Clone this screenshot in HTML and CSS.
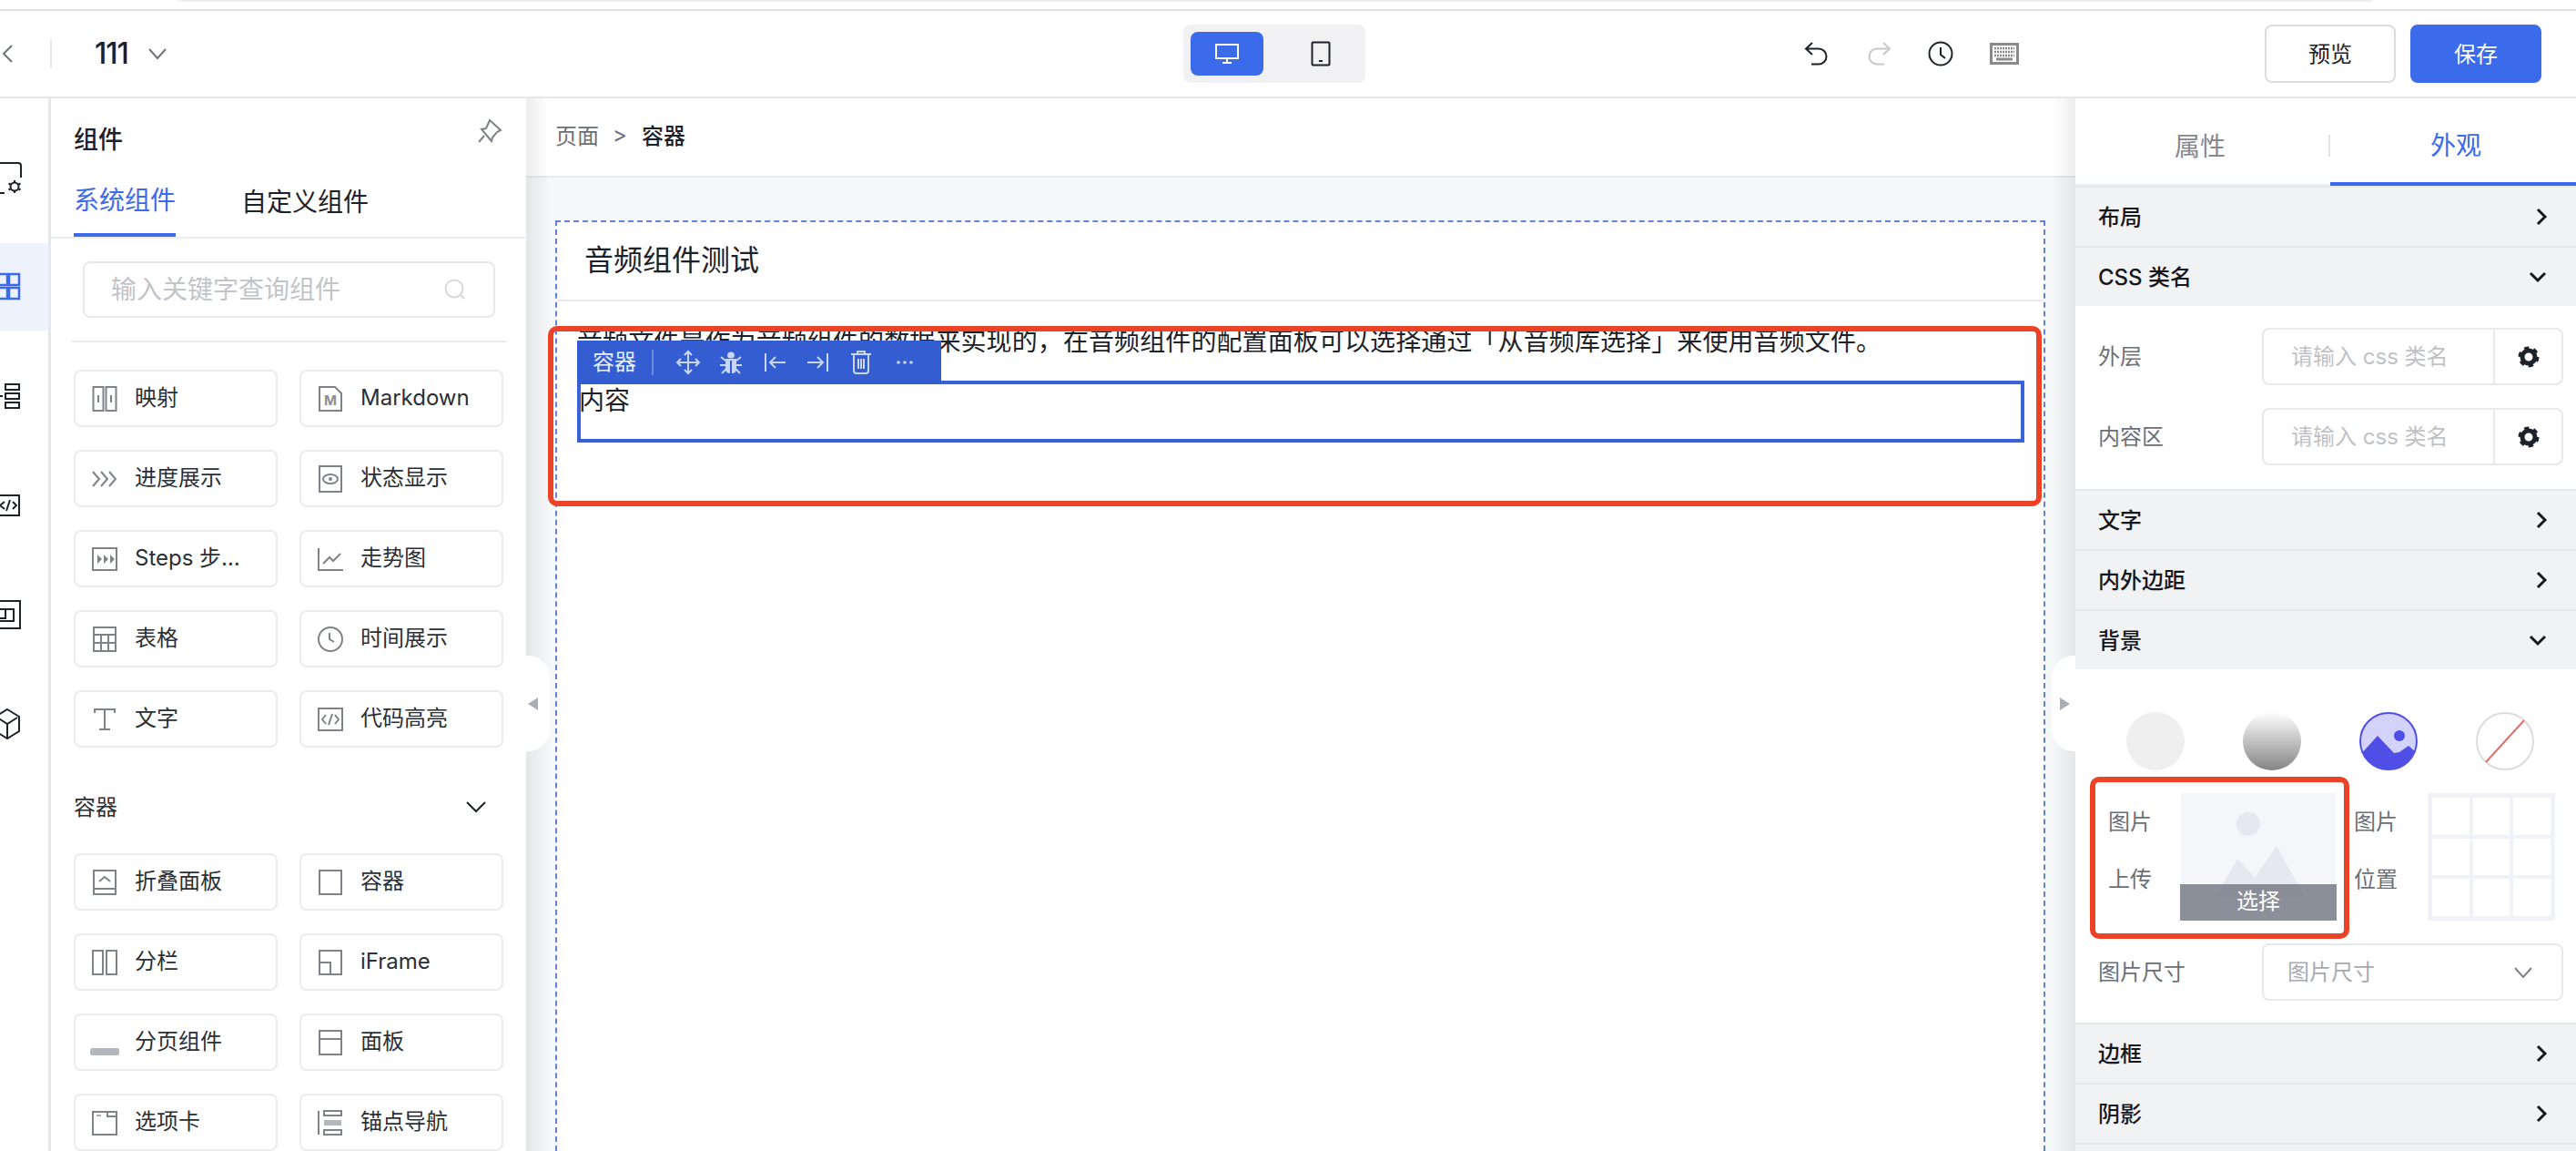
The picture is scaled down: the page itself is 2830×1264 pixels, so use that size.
FILE: index.html
```html
<!DOCTYPE html>
<html lang="zh-CN">
<head>
<meta charset="utf-8">
<title>111</title>
<link rel="stylesheet" href="styles.css">
</head>
<body>
<div class="strip"><div class="strip-bar"></div></div>
<header class="header">
  <div class="h-left">
    <svg class="h-back" width="14" height="22" viewBox="0 0 14 22"><polyline points="12,2 3,11 12,20"/></svg>
    <span class="h-sep"></span>
    <span class="h-name">111</span>
    <svg class="h-caret" width="22" height="14" viewBox="0 0 22 14"><polyline points="2,2 11,12 20,2"/></svg>
  </div>
  <div class="devices">
    <div class="device on">
      <svg width="26" height="24" viewBox="0 0 26 24" class="i-white"><rect x="1" y="2" width="24" height="15"/><line x1="13" y1="17" x2="13" y2="22"/><line x1="8" y1="22" x2="18" y2="22"/></svg>
    </div>
    <div class="device">
      <svg width="22" height="28" viewBox="0 0 22 28" class="i-dark"><rect x="1.500" y="1.500" width="19" height="25" rx="1"/><rect x="9" y="21" width="4" height="2" class="i-solid"/></svg>
    </div>
  </div>
  <div class="h-tools">
    <svg width="28" height="28" viewBox="0 0 28 28" class="i-dark"><path d="M9 2 L2 8.500 L9 15 M2 8.500 H16 a8 8 0 0 1 0 17 H8"/></svg>
    <svg width="28" height="28" viewBox="0 0 28 28" class="i-light"><path d="M19 2 L26 8.500 L19 15 M26 8.500 H12 a8 8 0 0 0 0 17 H20"/></svg>
    <svg width="28" height="28" viewBox="0 0 28 28" class="i-dark"><circle cx="14" cy="14" r="12.500"/><polyline points="14,7 14,15 19,19"/></svg>
    <svg width="32" height="24" viewBox="0 0 32 24" class="i-kbd"><rect x="1.500" y="1.500" width="29" height="21"/><line x1="5" y1="6" x2="27" y2="6" class="d"/><line x1="5" y1="10" x2="27" y2="10" class="d"/><line x1="5" y1="14" x2="27" y2="14" class="d"/><line x1="7" y1="18" x2="25" y2="18"/></svg>
  </div>
  <div class="h-actions">
    <button class="btn"><span class="up">预览</span></button>
    <button class="btn primary"><span class="up">保存</span></button>
  </div>
</header>
<main class="main">
  <nav class="rail">
    <div class="rail-item"><svg width="36" height="36" viewBox="0 0 36 36" class="i-dark"><path d="M0 2 H32 a3 3 0 0 1 3 3 V18 M0 35 H17"/><circle cx="11" cy="8" r="1" class="i-solid"/><circle cx="28" cy="28" r="4.500"/><path d="M28 21 V23 M28 33 V35 M21.500 24.500 L23.500 25.500 M32.500 30.500 L34.500 31.500 M21.500 31.500 L23.500 30.500 M32.500 25.500 L34.500 24.500"/></svg></div>
    <div class="rail-item active"><svg width="36" height="36" viewBox="-12 0 36 36" class="i-blue"><rect x="-3" y="4" width="11" height="12"/><rect x="10" y="4" width="11" height="12"/><rect x="-3" y="19" width="11" height="12"/><rect x="10" y="19" width="11" height="12"/></svg></div>
    <div class="rail-item"><svg width="36" height="36" viewBox="-12 0 36 36" class="i-dark"><rect x="6" y="5" width="15" height="6"/><rect x="6" y="15" width="15" height="6"/><rect x="6" y="25" width="15" height="6"/><line x1="0" y1="18" x2="3" y2="18"/></svg></div>
    <div class="rail-item"><svg width="36" height="36" viewBox="-12 0 36 36" class="i-dark"><rect x="-6" y="7" width="27" height="22"/><path d="M5 14 L0 18 L5 22 M14 14 L18 18 L14 22 M11 12 L7 24"/></svg></div>
    <div class="rail-item"><svg width="36" height="36" viewBox="-12 0 36 36" class="i-dark"><rect x="-7" y="3" width="29" height="30"/><path d="M-2 12 H15 V25 H-2"/><path d="M-4 22 H6 V12"/></svg></div>
    <div class="rail-item"><svg width="36" height="36" viewBox="-12 0 36 36" class="i-dark"><path d="M8 2 L21 10 V26 L8 34 L-5 26 V10 Z M-3 11 L8 18 L19 11 M8 18 V33"/></svg></div>
  </nav>

  <aside class="panel">
    <div class="p-head">
      <span class="p-title">组件</span>
      <svg width="28" height="28" viewBox="0 0 28 28" class="i-grey"><path d="M14 2 L26 13 L22 15 L17 21 L16 25 L5 12 L10 11 Z M8 19 L2 26"/></svg>
    </div>
    <div class="p-tabs"><span class="p-tab on">系统组件</span><span class="p-tab">自定义组件</span></div>
    <div class="search"><span class="up">输入关键字查询组件</span>
      <svg width="26" height="26" viewBox="0 0 26 26" class="i-pale"><circle cx="12" cy="12" r="9.500"/><line x1="19" y1="19" x2="23" y2="23"/></svg>
    </div>
    <div class="p-rule"></div>
    <div class="grid">
      <div class="item"><svg class="ico" viewBox="0 0 32 32"><rect x="3.500" y="3" width="11" height="26"/><rect x="17.500" y="3" width="11" height="26"/><path d="M9 12 V20 M23 12 V20"/></svg><span class="lbl">映射</span></div>
      <div class="item"><svg class="ico" viewBox="0 0 32 32"><path d="M4 3 H21 L28 10 V29 H4 Z"/><text x="16" y="23" class="mk">M</text></svg><span class="lbl">Markdown</span></div>
      <div class="item"><svg class="ico" viewBox="0 0 32 32"><path d="M3 8 L10 16 L3 24 M12 8 L19 16 L12 24 M21 8 L28 16 L21 24"/></svg><span class="lbl">进度展示</span></div>
      <div class="item"><svg class="ico" viewBox="0 0 32 32"><rect x="4" y="2" width="24" height="28"/><ellipse cx="16" cy="16" rx="8" ry="5"/><circle cx="16" cy="16" r="2" class="i-fill"/></svg><span class="lbl">状态显示</span></div>
      <div class="item"><svg class="ico" viewBox="0 0 32 32"><rect x="3" y="4" width="26" height="24"/><path d="M8 11 L13 16 L8 21 Z M15 11 L20 16 L15 21 Z M22 11 L27 16 L22 21 Z" class="i-fill"/></svg><span class="lbl">Steps 步…</span></div>
      <div class="item"><svg class="ico" viewBox="0 0 32 32"><path d="M3 4 V28 H30 M8 21 L15 14 L19 18 L27 10"/></svg><span class="lbl">走势图</span></div>
      <div class="item"><svg class="ico" viewBox="0 0 32 32"><rect x="4" y="3" width="24" height="26"/><path d="M4 11 H28 M4 20 H28 M12 11 V29 M20 11 V29"/></svg><span class="lbl">表格</span></div>
      <div class="item"><svg class="ico" viewBox="0 0 32 32"><circle cx="16" cy="16" r="13"/><polyline points="15,9 15,16 20,19"/></svg><span class="lbl">时间展示</span></div>
      <div class="item"><svg class="ico" viewBox="0 0 32 32"><path d="M5 9 V5 H27 V9 M16 5 V27 M10 27 H22"/></svg><span class="lbl">文字</span></div>
      <div class="item"><svg class="ico" viewBox="0 0 32 32"><rect x="3" y="4" width="26" height="24"/><path d="M11 11 L7 16 L11 21 M21 11 L25 16 L21 21 M18 10 L14 22"/></svg><span class="lbl">代码高亮</span></div>
    </div>
    <div class="sec-head"><span class="up">容器</span><svg width="24" height="16" viewBox="0 0 24 16" class="i-dark"><polyline points="2,3 12,13 22,3"/></svg></div>
    <div class="grid">
      <div class="item"><svg class="ico" viewBox="0 0 32 32"><rect x="4" y="3" width="24" height="26"/><path d="M4 23 H28 M10 15 L16 10 L22 15"/></svg><span class="lbl">折叠面板</span></div>
      <div class="item"><svg class="ico" viewBox="0 0 32 32"><rect x="4" y="3" width="24" height="26"/></svg><span class="lbl">容器</span></div>
      <div class="item"><svg class="ico" viewBox="0 0 32 32"><rect x="3" y="3" width="11" height="26"/><rect x="18" y="3" width="11" height="26"/></svg><span class="lbl">分栏</span></div>
      <div class="item"><svg class="ico" viewBox="0 0 32 32"><rect x="4" y="3" width="24" height="26"/><path d="M4 16 H16 V29"/></svg><span class="lbl">iFrame</span></div>
      <div class="item"><svg class="ico" viewBox="0 0 32 32"><rect x="0" y="22" width="32" height="8" rx="2" class="i-pill"/></svg><span class="lbl">分页组件</span></div>
      <div class="item"><svg class="ico" viewBox="0 0 32 32"><rect x="4" y="3" width="24" height="26"/><path d="M4 12 H28"/></svg><span class="lbl">面板</span></div>
      <div class="item"><svg class="ico" viewBox="0 0 32 32"><path d="M3 4 H29 V29 H3 Z M19 4 V9 H29"/><path d="M7 8 H12" class="pale"/></svg><span class="lbl">选项卡</span></div>
      <div class="item"><svg class="ico" viewBox="0 0 32 32"><path d="M3 3 V29"/><rect x="9" y="3" width="19" height="5"/><rect x="9" y="24" width="19" height="5"/><path d="M9 16 H28" class="pale-thick"/></svg><span class="lbl">锚点导航</span></div>
    </div>
  </aside>

  <section class="canvas">
    <div class="crumbs"><span class="c-a">页面</span><span class="c-gt">&gt;</span><span class="c-b">容器</span></div>
    <div class="stage">
      <div class="page">
        <div class="page-title">音频组件测试</div>
        <div class="page-body">
          <p class="para">音频文件是作为音频组件的数据来实现的，在音频组件的配置面板可以选择通过「从音频库选择」来使用音频文件。</p>
          <div class="box">内容
            <div class="tb">
              <span class="tb-name">容器</span><span class="tb-sep"></span>
              <span class="tb-i"><svg width="26" height="26" viewBox="0 0 26 26"><path d="M13 1 V25 M1 13 H25 M9 5 L13 1 L17 5 M9 21 L13 25 L17 21 M5 9 L1 13 L5 17 M21 9 L25 13 L21 17"/></svg></span>
              <span class="tb-i"><svg width="26" height="26" viewBox="0 0 26 26"><ellipse cx="13" cy="5" rx="4" ry="3.500" class="f"/><path d="M7 9 H19 V20 Q19 25 14 25 V11 H12 V25 Q7 25 7 20 Z" class="f"/><path d="M2 7 L7 11 M24 7 L19 11 M1 16 H7 M25 16 H19 M3 25 L8 20 M23 25 L18 20"/></svg></span>
              <span class="tb-i"><svg width="26" height="26" viewBox="0 0 26 26"><path d="M3 3 V23 M25 13 H8 M14 7 L8 13 L14 19"/></svg></span>
              <span class="tb-i"><svg width="26" height="26" viewBox="0 0 26 26"><path d="M23 3 V23 M1 13 H18 M12 7 L18 13 L12 19"/></svg></span>
              <span class="tb-i"><svg width="26" height="26" viewBox="0 0 26 26"><path d="M2 4 H24 M9 4 V1 H17 V4 M5 4 V22 Q5 25 8 25 H18 Q21 25 21 22 V4 M10 9 V20 M13 9 V20 M16 9 V20"/></svg></span>
              <span class="tb-i"><svg width="26" height="26" viewBox="0 0 26 26"><circle cx="6" cy="13" r="1.800" class="f"/><circle cx="13" cy="13" r="1.800" class="f"/><circle cx="20" cy="13" r="1.800" class="f"/></svg></span>
            </div>
          </div>
        </div>
        <div class="mark mark-main"></div>
      </div>
    </div>
    <div class="handle handle-l"><span class="tri-l"></span></div>
    <div class="handle handle-r"><span class="tri-r"></span></div>
  </section>

  <aside class="props">
    <div class="r-tabs">
      <span class="r-tab">属性</span><span class="r-tab on">外观</span>
    </div>
    <div class="sec"><span class="up">布局</span><svg class="cv-r" viewBox="0 0 14 22"><polyline points="3,3 11,11 3,19"/></svg></div>
    <div class="sec"><span class="up">CSS 类名</span><svg class="cv-d" viewBox="0 0 22 14"><polyline points="3,3 11,11 19,3"/></svg></div>
    <div class="sec-body">
      <div class="f-row"><span class="f-lbl up">外层</span><div class="input"><span class="ph up">请输入 css 类名</span><span class="addon"><svg width="24" height="24" viewBox="0 0 24 24"><circle cx="12" cy="12" r="7" class="cog"/><circle cx="12" cy="12" r="9.500" class="cog-t"/></svg></span></div></div>
      <div class="f-row"><span class="f-lbl up">内容区</span><div class="input"><span class="ph up">请输入 css 类名</span><span class="addon"><svg width="24" height="24" viewBox="0 0 24 24"><circle cx="12" cy="12" r="7" class="cog"/><circle cx="12" cy="12" r="9.500" class="cog-t"/></svg></span></div></div>
    </div>
    <div class="sec"><span class="up">文字</span><svg class="cv-r" viewBox="0 0 14 22"><polyline points="3,3 11,11 3,19"/></svg></div>
    <div class="sec"><span class="up">内外边距</span><svg class="cv-r" viewBox="0 0 14 22"><polyline points="3,3 11,11 3,19"/></svg></div>
    <div class="sec"><span class="up">背景</span><svg class="cv-d" viewBox="0 0 22 14"><polyline points="3,3 11,11 19,3"/></svg></div>
    <div class="bg-body">
      <div class="swatches">
        <span class="sw"><span class="sw-c sw-flat"></span></span>
        <span class="sw"><span class="sw-c sw-grad"></span></span>
        <span class="sw"><svg width="64" height="64" viewBox="0 0 64 64"><defs><clipPath id="cc"><circle cx="32" cy="32" r="31"/></clipPath></defs><circle cx="32" cy="32" r="31" class="s-bg"/><g clip-path="url(#cc)"><path d="M0 48 L20 26 L38 45 L44 44 L54 37 L64 46 V64 H0 Z" class="s-fg"/><circle cx="44" cy="26" r="6" class="s-fg"/></g></svg></span>
        <span class="sw"><span class="sw-c sw-none"><svg width="60" height="60" viewBox="0 0 60 60"><line x1="51" y1="7" x2="9" y2="53"/></svg></span></span>
      </div>
      <div class="up-row">
        <div class="up-labels"><span>图片</span><span>上传</span></div>
        <div class="up-img">
          <svg width="170" height="139" viewBox="0 0 170 139"><circle cx="74" cy="34" r="13"/><path d="M38 114 L62 72 L81 93 L105 58 L136 114 Z"/></svg>
          <span class="up-bar">选择</span>
        </div>
        <div class="up-labels up-labels-2"><span>图片</span><span>位置</span></div>
        <div class="pos"><i></i><i></i><i></i><i></i><i></i><i></i><i></i><i></i><i></i></div>
        <div class="mark mark-up"></div>
      </div>
      <div class="f-row"><span class="f-lbl up">图片尺寸</span><div class="input select"><span class="ph ph-sel up">图片尺寸</span><svg width="22" height="14" viewBox="0 0 22 14" class="i-grey"><polyline points="2,2 11,12 20,2"/></svg></div></div>
    </div>
    <div class="sec"><span class="up">边框</span><svg class="cv-r" viewBox="0 0 14 22"><polyline points="3,3 11,11 3,19"/></svg></div>
    <div class="sec"><span class="up">阴影</span><svg class="cv-r" viewBox="0 0 14 22"><polyline points="3,3 11,11 3,19"/></svg></div>
    <div class="sec"></div>
  </aside>
</main>
</body>
</html>
```

FILE: styles.css
```css
* { box-sizing: border-box; }
html, body { margin: 0; padding: 0; }
body {
  width: 2830px; height: 1264px; overflow: hidden; background: #fff;
  font-family: Inter, "Noto Sans CJK SC", sans-serif; color: #1d2129;
  display: flex; flex-direction: column;
}
svg { display: block; flex: none; overflow: visible; }

/* Inter's line box sits the CJK fallback low; this lifts centred labels back. */
.up { padding-bottom: 4px; display: inline-block; }

.strip { height: 12px; border-bottom: 2px solid #dfdfdf; padding: 0 224px 0 195px; flex: none; }
.strip-bar { height: 2px; background: #f0f0f0; border-radius: 0 0 6px 6px; }

.header { height: 96px; flex: none; border-bottom: 2px solid #e7e7e7; display: flex; align-items: center; }
.h-left { width: 1300px; display: flex; align-items: center; padding-left: 1px; }
.h-back polyline { fill: none; stroke: #6f737a; stroke-width: 2; }
.h-sep { width: 2px; height: 32px; background: #e8e8e8; margin-left: 40px; }
.h-name { font-size: 32px; font-weight: 500; margin-left: 47px; line-height: 40px; color: #1d2129; letter-spacing: -1px; }
.h-caret { margin-left: 21px; }
.h-caret polyline { fill: none; stroke: #6f737a; stroke-width: 2; }

.devices { width: 200px; height: 64px; background: #f1f1f4; border-radius: 8px; display: flex; align-items: center; padding-left: 8px; }
.device { width: 80px; height: 48px; display: flex; align-items: center; justify-content: center; border-radius: 8px; }
.device.on { background: #3b6aea; }
.device + .device { margin-left: 23px; }

.h-tools { display: flex; align-items: center; gap: 40px; margin-left: 482px; width: 250px; }
.i-dark, .i-dark * { fill: none; stroke: #1d2129; stroke-width: 2; }
.i-white * { fill: none; stroke: #fff; stroke-width: 2; }
.i-light * { fill: none; stroke: #c6c8cc; stroke-width: 2; }
.i-blue * { fill: none; stroke: #3b6aea; stroke-width: 2.500; }
.i-grey, .i-grey * { fill: none; stroke: #7f8288; stroke-width: 2; }
.i-pale * { fill: none; stroke: #d8d9dc; stroke-width: 2; }
.i-dark .i-solid { fill: #1d2129; stroke: none; }
.i-kbd * { fill: none; stroke: #8a8a8c; stroke-width: 3; }
.i-kbd .d { stroke-width: 2.500; stroke-dasharray: 2 1; }

.h-actions { display: flex; gap: 16px; margin-left: auto; padding-right: 38px; }
.btn { width: 144px; height: 64px; border: 2px solid #dcdcdc; border-radius: 8px; background: #fff; font: 400 24px Inter, "Noto Sans CJK SC", sans-serif; color: #1d2129; padding: 0; }
.btn.primary { background: #3b6aea; border-color: #3b6aea; color: #fff; }

.main { flex: 1; min-height: 0; display: flex; }

.rail { width: 56px; flex: none; border-right: 3px solid #e6e7ea; padding-top: 39px; display: flex; flex-direction: column; gap: 24px; overflow: hidden; }
.rail-item { height: 96px; flex: none; display: flex; align-items: center; justify-content: flex-end; padding-right: 29px; }
.rail-item.active { background: #eef2fd; }

.panel { width: 522px; flex: none; background: #fff; overflow: hidden; }
.p-head { height: 88px; display: flex; align-items: center; justify-content: space-between; padding: 4px 26px 0 25px; }
.p-head svg { margin-top: -20px; }
.p-title { font-size: 27px; font-weight: 500; line-height: 40px; }
.p-tabs { height: 66px; border-bottom: 2px solid #ececee; padding-left: 25px; display: flex; gap: 72px; align-items: flex-end; }
.p-tab { font-size: 28px; line-height: 40px; height: 64px; padding-top: 6px; width: fit-content; }
.p-tab.on { color: #3b6aea; border-bottom: 4px solid #3b6aea; height: 66px; }
.search { margin: 25px 34px 0 35px; height: 62px; border: 2px solid #e8e9ec; border-radius: 8px; display: flex; align-items: center; justify-content: space-between; padding: 0 29px 0 29px; font-size: 28px; color: #c2c4c9; }
.p-rule { height: 2px; background: #e8e9ec; margin: 25px 22px 0 23px; }

.grid { display: grid; grid-template-columns: 224px 224px; column-gap: 24px; row-gap: 25px; padding-left: 25px; }
.p-rule + .grid { margin-top: 30px; }
.item { height: 63px; border: 2px solid #ebecee; border-radius: 8px; display: flex; align-items: center; padding-left: 16px; font-size: 24px; color: #2b2f36; min-width: 0; }
.ico { width: 32px; height: 32px; margin-right: 17px; }
.ico * { fill: none; stroke: #7f8288; stroke-width: 2; }
.ico .i-fill { fill: #7f8288; stroke: none; }
.ico .i-pill { fill: #b5b7bd; stroke: none; }
.ico .pale { stroke: #a9abb0; }
.ico .pale-thick { stroke: #b5b7bd; stroke-width: 6; }
.ico .mk { font: 700 15px Inter, sans-serif; fill: #8b8e94; stroke: none; text-anchor: middle; }
.lbl { line-height: 34px; white-space: nowrap; padding-bottom: 2px; }
.sec-head { height: 42px; margin: 44px 43px 30px 25px; display: flex; align-items: center; justify-content: space-between; font-size: 24px; color: #2b2f36; }

.canvas { flex: 1; min-width: 0; position: relative; display: flex; flex-direction: column; background: #f6f7f9; }
.canvas::before, .canvas::after { content: ""; position: absolute; top: 0; bottom: 0; width: 26px; pointer-events: none; }
.canvas::before { left: 0; background: linear-gradient(to right, rgba(0,0,0,.07), rgba(0,0,0,0)); }
.canvas::after { right: 0; background: linear-gradient(to left, rgba(0,0,0,.07), rgba(0,0,0,0)); }
.crumbs { height: 87px; flex: none; background: #fff; border-bottom: 2px solid #e8e9ec; display: flex; align-items: center; padding: 0 0 6px 32px; font-size: 24px; }
.c-a { color: #6b6f76; }
.c-gt { color: #6b6f76; margin: 0 16px 0 15px; }
.c-b { font-weight: 500; }
.stage { flex: 1; min-height: 0; padding: 47px 33px 0 32px; }
.page { height: 100%; position: relative; background: #fff; border: 2px dashed #5f82e4; border-bottom: 0; }
.page-title { height: 87px; border-bottom: 2px solid #e8e9ec; font-size: 32px; line-height: 40px; padding: 22px 0 0 30px; }
.page-body { padding: 26px 21px 0 22px; }
.para { margin: 0 0 25px; font-size: 28px; line-height: 36px; color: #1d2129; white-space: nowrap; letter-spacing: .1px; }
.box { position: relative; height: 68px; border: 4px solid #3a62d8; font-size: 28px; line-height: 36px; text-indent: -2px; }
.tb { position: absolute; left: -4px; top: -48px; width: 400px; height: 48px; background: #335dd0; display: flex; align-items: center; padding-left: 17px; color: #e9eefc; font-size: 24px; text-indent: 0; }
.tb-name { width: 48px; }
.tb-sep { width: 2px; height: 28px; background: #6e8bde; margin: 0 14px 0 17px; }
.tb-i { width: 47.600px; display: flex; justify-content: center; }
.tb-i svg * { fill: none; stroke: #c9d6f7; stroke-width: 2; }
.tb-i svg .f { fill: #c9d6f7; stroke: none; }

.mark { position: absolute; border: 6px solid #ec4226; border-radius: 10px; pointer-events: none; }
.mark-main { left: -10px; top: 114px; width: 1641px; height: 198px; }

.handle { position: absolute; top: 612px; height: 105px; width: 26px; background: #fff; display: flex; align-items: center; z-index: 1; }
.handle-l { left: 0; border-radius: 0 24px 24px 0; padding-left: 2px; }
.handle-r { right: 0; border-radius: 24px 0 0 24px; padding-left: 9px; }
.tri-l { width: 0; height: 0; border: 7px solid transparent; border-left: 0; border-right: 11px solid #a9adb6; }
.tri-r { width: 0; height: 0; border: 7px solid transparent; border-right: 0; border-left: 11px solid #a9adb6; }

.props { width: 550px; flex: none; background: #fff; overflow: hidden; }
.r-tabs { height: 96px; display: flex; align-items: center; }
.r-tab { flex: none; height: 96px; display: flex; align-items: center; justify-content: center; font-size: 28px; color: #85888e; padding-top: 8px; }
.r-tab:first-child { width: 280px; border-bottom: 2px solid #eceded; position: relative; padding-right: 6px; }
.r-tab:first-child::after { content: ""; position: absolute; right: 0; top: 40px; width: 2px; height: 24px; background: #e3e4e6; }
.r-tab.on { width: 270px; color: #3b6aea; border-bottom: 4px solid #3b6aea; padding-left: 6px; }
.sec { height: 66px; flex: none; background: #f1f2f4; border-top: 2px solid #e6e7ea; display: flex; align-items: center; justify-content: space-between; padding: 0 26px 0 25px; font-size: 24px; font-weight: 500; color: #14171c; }
.cv-r { width: 14px; height: 22px; margin-right: 5px; }
.cv-d { width: 22px; height: 14px; margin-right: 5px; }
.cv-r polyline, .cv-d polyline { fill: none; stroke: #14171c; stroke-width: 3; }
.sec-body { padding: 24px 14px 26px 25px; display: flex; flex-direction: column; gap: 25px; }
.f-row { display: flex; align-items: center; height: 63px; }
.f-lbl { width: 180px; flex: none; font-size: 24px; color: #6b6f76; }
.input { width: 331px; height: 63px; border: 2px solid #e8e9ec; border-radius: 8px; display: flex; align-items: center; justify-content: space-between; }
.ph { padding-left: 30px; font-size: 24px; color: #bfc1c6; }
.addon { width: 75px; height: 100%; border-left: 2px solid #e8e9ec; display: flex; align-items: center; justify-content: center; }
.cog { fill: none; stroke: #1d2129; stroke-width: 5; }
.cog-t { fill: none; stroke: #1d2129; stroke-width: 4; stroke-dasharray: 5 4.950; }
.select { padding-right: 31px; }
.ph-sel { padding-left: 26px; color: #a8abb0; }

.bg-body { padding: 47px 14px 26px 25px; height: 388px; }
.swatches { display: grid; grid-template-columns: repeat(4, 128px); margin-left: -1px; height: 64px; }
.sw { display: flex; justify-content: center; }
.sw-c { width: 64px; height: 64px; border-radius: 50%; display: block; }
.sw-flat { background: #efefef; }
.sw-grad { background: linear-gradient(#ffffff, #858585); }
.sw-none { border: 2px solid #dcdcdc; }
.sw-none line { stroke: #e2706a; stroke-width: 2; }
.s-bg { fill: #d3d3fa; stroke: #4f4fe8; stroke-width: 2; }
.s-fg { fill: #4f4fe8; }

.up-row { position: relative; display: flex; height: 140px; margin: 25px 0 25px 11px; }
.up-labels { width: 80px; flex: none; display: flex; flex-direction: column; gap: 27px; padding-top: 14px; font-size: 24px; line-height: 36px; color: #6b6f76; }
.up-labels-2 { margin-left: 20px; width: 81px; }
.up-img { position: relative; width: 170px; height: 140px; background: #f5f6fa; flex: none; }
.up-img svg * { fill: #e5e8ef; }
.up-bar { position: absolute; left: -1px; right: -1px; bottom: 0; height: 40px; background: rgba(120,125,135,.85); color: #fff; font-size: 24px; line-height: 38px; text-align: center; }
.pos { width: 140px; height: 140px; flex: none; background: #f0f2f8; padding: 5px; display: grid; grid-template-columns: repeat(3, 1fr); grid-template-rows: repeat(3, 1fr); gap: 4px; }
.pos i { background: #fff; display: block; }
.mark-up { left: -20px; top: -18px; width: 285px; height: 178px; }
```
